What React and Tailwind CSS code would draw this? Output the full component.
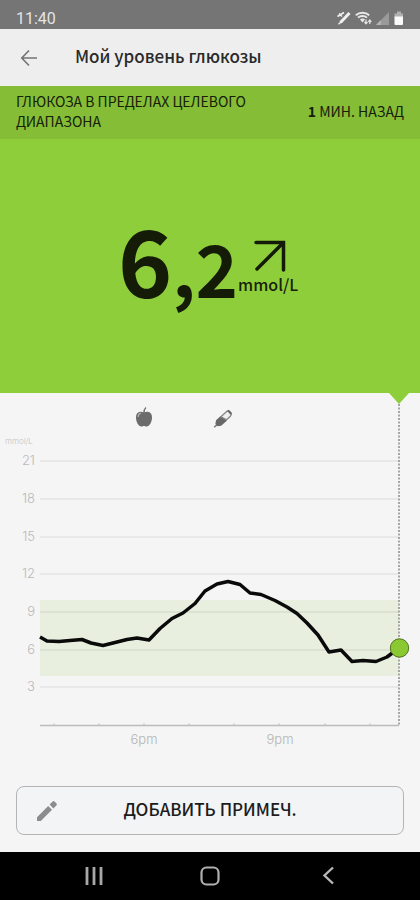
import React from 'react';

const gridLines = [
  { label: '21', y: 68 },
  { label: '18', y: 106 },
  { label: '15', y: 144 },
  { label: '12', y: 181 },
  { label: '9', y: 219 },
  { label: '6', y: 257 },
  { label: '3', y: 294 },
];

const ticks = [54, 99, 144, 189, 234, 279, 325, 370];

const readings = [
  [40, 244], [47, 248], [59, 248.5], [70, 247.5], [82, 246.5], [91, 250], [103, 252.5],
  [115, 249.5], [127, 246.5], [137, 245], [149, 247], [160, 235.5], [172, 225.5],
  [183, 220], [195, 210.5], [205, 198], [217, 191], [228, 188.5], [240, 191.5],
  [250, 200], [261, 201.5], [275, 207.5], [287, 214], [297, 220.5], [307, 230],
  [318, 242], [329, 259], [341, 257], [352, 268.5], [363, 267.5], [376, 268.5],
  [387, 264], [399, 255],
];

const StatusBar = () => (
  <div className="h-[29px] shrink-0 bg-[#757575] flex items-end justify-between px-4 pb-1">
    <span className="font-[Roboto,sans-serif] text-[16px] leading-3 text-[#e4e4e4]">11:40</span>
    <div className="flex items-center gap-1">
      <svg className="w-[14px] h-[14px]" viewBox="0 0 14 14" fill="none" stroke="#f0f0f0">
        <path d="M3.5 11.5L12.5 2" strokeWidth="3" />
        <path d="M1.5 13.3l2.5-2.3" strokeWidth="1.5" />
        <path d="M.5 5.5L7 1.5M2 2.5l3 3" strokeWidth="1.6" />
      </svg>
      <svg className="w-[17px] h-[14px]" viewBox="0 0 17 14" fill="none" stroke="#e8e8e8">
        <path d="M.8 4.2C4.5.9 10.5.9 14.2 4.2M3 6.6c2.5-2.2 6.5-2.2 9 0" strokeWidth="1.9" />
        <path d="M5 8.5L7.5 11.5l2.5-3c-1.3-1.3-3.7-1.3-5 0z" fill="#e8e8e8" stroke="none" />
        <path d="M11 8.5v4M9.5 11L11 12.8l1.5-1.8M14.8 13V9M13.3 10.8L14.8 9l1.5 1.8" strokeWidth="1.2" />
      </svg>
      <svg className="w-[13px] h-[13px]" viewBox="0 0 13 13">
        <path d="M13 0v13H0z" fill="#9a9a9a" />
        <path d="M5 8v5H0z" fill="#b4b4b4" />
      </svg>
      <svg className="w-[11px] h-[14px]" viewBox="0 0 11 14">
        <path d="M4 .5h4v2h2v4H1.5v-4H4z" fill="#b0b0b0" />
        <path d="M1.5 5.5H10V13a1 1 0 01-1 1H2.5a1 1 0 01-1-1z" fill="#fafafa" />
      </svg>
    </div>
  </div>
);

const Header = () => (
  <header className="h-[57px] shrink-0 bg-[#eeeeee] flex items-center px-5">
    <button aria-label="Назад" className="w-[19px] mr-9">
      <svg className="w-[18px] h-[18px]" viewBox="0 0 18 18" fill="none" stroke="#757575" strokeWidth="1.7">
        <path d="M17 9H2M9 1.5L1.8 9L9 16.5" />
      </svg>
    </button>
    <h1 className="pb-1 text-[17px] leading-6 font-medium text-[#2a2a2a]">Мой уровень глюкозы</h1>
  </header>
);

const Chart = () => (
  <svg className="block w-full" viewBox="0 0 420 377" fontFamily="Inter, sans-serif">
    <path d="M389 0h20l-10 11z" fill="#8fce3b" />

    {/* Meal marker */}
    <g transform="translate(136 14)">
      <path d="M8 5.5C5 3.8 0 4.5 0 10.5c0 4.5 2.5 9 5.5 9 1.2 0 1.5-.5 2.5-.5s1.3.5 2.5.5c3 0 5.5-4.5 5.5-9 0-6-5-6.7-8-5z" fill="#6c6c6c" />
      <path d="M8 6C7.8 3.5 8.5 1.8 10 .5" fill="none" stroke="#6c6c6c" strokeWidth="1.3" />
      <path d="M2 10c.1-2.2 1.2-3.5 3-4" fill="none" stroke="#b5b5b5" strokeWidth="1.2" />
    </g>

    {/* Insulin marker */}
    <g transform="translate(223 26) rotate(-43)">
      <path d="M-12 0h4" stroke="#777" strokeWidth="1.5" />
      <path d="M-9-1.5l3-2.3H0l2 7.6h-8l-3-2.3z" fill="#686868" />
      <path d="M0-3h7c2 0 3 1.2 3 3s-1 3-3 3H2z" fill="#f0f0f0" stroke="#858585" strokeWidth="1.3" />
      <path d="M9.5-3v5" stroke="#666" strokeWidth="2" />
    </g>

    <rect x="40" y="207" width="359" height="76" fill="#e8efdf" />
    <text x="5" y="51" fontSize="8" fill="#c4c4c4" fontWeight="300">mmol/L</text>

    {gridLines.map((line) => (
      <g key={line.label}>
        <path d={`M40 ${line.y}H399`} stroke="#000" strokeOpacity="0.07" strokeWidth="1.5" />
        <text x="35" y={line.y + 4} fontSize="13" fill="#b9b9b9" fontWeight="300" textAnchor="end">
          {line.label}
        </text>
      </g>
    ))}

    <path d="M40 332.5H399" stroke="#bcbcbc" strokeWidth="1.3" />
    {ticks.map((x) => (
      <path key={x} d={`M${x} 330.5v2`} stroke="#bcbcbc" />
    ))}
    <text x="144" y="351" fontSize="13" fill="#b4b4b4" fontWeight="300" textAnchor="middle">6pm</text>
    <text x="280" y="351" fontSize="13" fill="#b4b4b4" fontWeight="300" textAnchor="middle">9pm</text>

    <path d="M399 11V333" stroke="#8c8c8c" strokeWidth="1.5" strokeDasharray="2 1.5" />
    <polyline
      points={readings.map((point) => point.join(',')).join(' ')}
      fill="none"
      stroke="#0a0a0a"
      strokeWidth="3.5"
      strokeLinejoin="round"
    />
    <circle cx="399.5" cy="255" r="9.2" fill="#8ac932" stroke="#54721f" />
  </svg>
);

const NavBar = () => (
  <nav className="h-12 shrink-0 bg-black flex items-center justify-around px-9">
    <button aria-label="Недавние">
      <svg className="w-5 h-5" viewBox="0 0 20 20" stroke="#a8a8a8" strokeWidth="2.8">
        <path d="M3 1v18M10 1v18M17 1v18" />
      </svg>
    </button>
    <button aria-label="Главный экран">
      <svg className="w-5 h-5" viewBox="0 0 20 20" fill="none" stroke="#b0b0b0" strokeWidth="2.2">
        <rect x="1.5" y="1.5" width="17" height="17" rx="5" />
      </svg>
    </button>
    <button aria-label="Назад">
      <svg className="w-5 h-5" viewBox="0 0 20 20" fill="none" stroke="#b8b8b8" strokeWidth="2.4">
        <path d="M17 1.5L8.5 9.5l8.5 8" />
      </svg>
    </button>
  </nav>
);

const App = () => {
  return (
    <div className="min-h-screen flex flex-col bg-[#f5f5f5] font-['Noto_Sans_CJK_SC',sans-serif] text-[#16200a]">
      <StatusBar />
      <Header />

      {/* Glucose status */}
      <div className="h-[53px] shrink-0 bg-[#85bd37] flex items-center justify-between gap-4 px-4 pb-1 text-[14px] leading-5">
        <p className="max-w-60">ГЛЮКОЗА В ПРЕДЕЛАХ ЦЕЛЕВОГО ДИАПАЗОНА</p>
        <p className="whitespace-nowrap"><span className="font-bold">1</span> МИН. НАЗАД</p>
      </div>

      {/* Current reading */}
      <section className="h-[254px] shrink-0 bg-[#8fce3b] flex items-center justify-center pr-1">
        <div className="flex items-baseline pb-2 font-bold text-[#141c08]">
          <span className="text-[92px] leading-[96px]">6</span>
          <span className="text-[72px] leading-[96px]">,2</span>
        </div>
        <div className="flex flex-col pt-1">
          <svg className="w-8 h-8 ml-4" viewBox="0 0 32 32" fill="none" stroke="#141c08" strokeWidth="3.5" strokeLinecap="round">
            <path d="M2 2.5h27.5V30M29 3L3 29" />
          </svg>
          <span className="text-[16px] leading-6 font-medium">mmol/L</span>
        </div>
      </section>

      <Chart />

      <div className="flex flex-col grow justify-end px-4 pt-4 pb-[17px]">
        <button className="relative h-[49px] w-full rounded-lg border border-[#b4b4b4] bg-[#f2f4f6] pb-1 text-[17px] font-medium text-[#1c1c1c]">
          <svg className="absolute left-5 top-[14px] w-5 h-5" viewBox="0 0 20 20" fill="#8c8c8c">
            <path d="M0 16.2V20h3.8L15 8.8 11.2 5zM19.5 4.3a1.5 1.5 0 000-1.8L17.5.5a1.5 1.5 0 00-1.9 0L12.6 3.6l3.8 3.8z" />
          </svg>
          ДОБАВИТЬ ПРИМЕЧ.
        </button>
      </div>

      <NavBar />
    </div>
  );
};

export default App;
